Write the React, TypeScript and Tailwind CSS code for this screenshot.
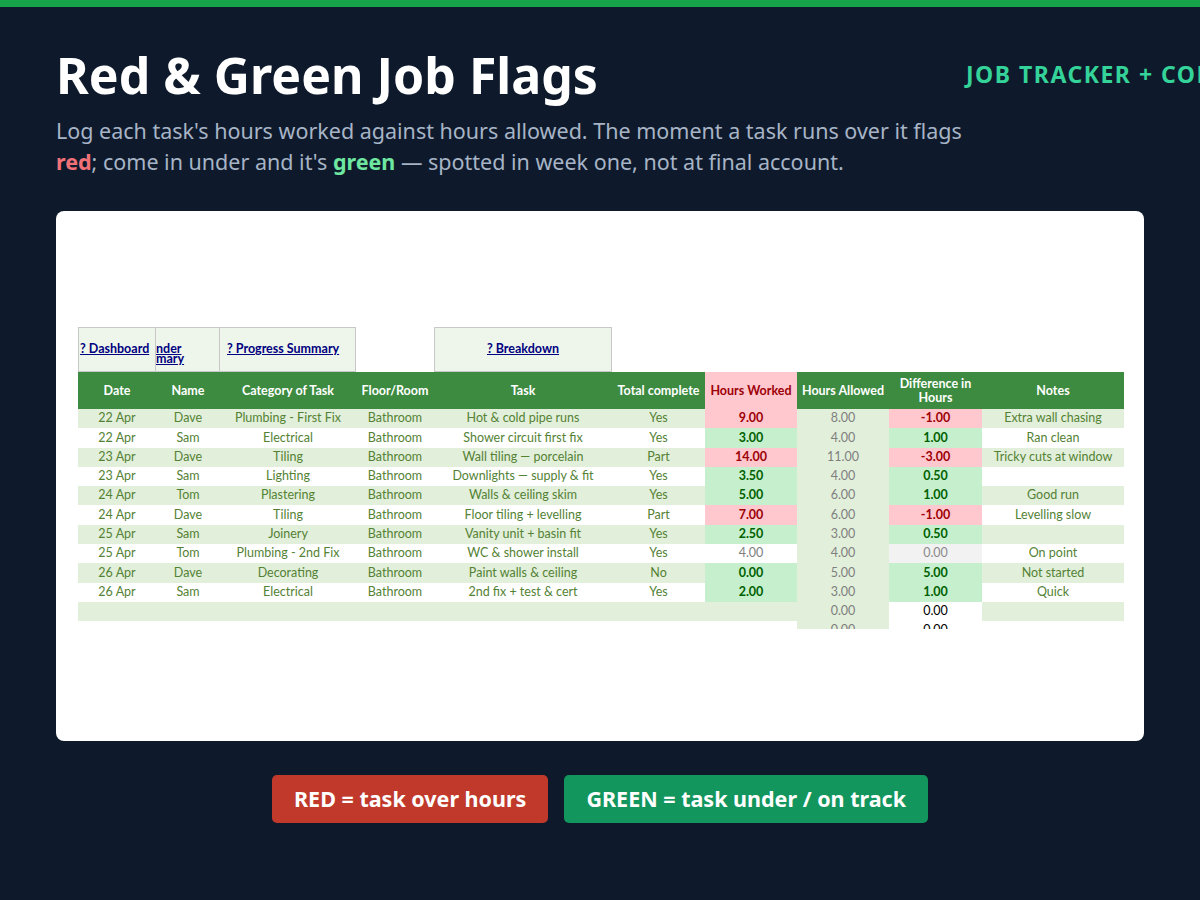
import React from "react";

type Flag = "red" | "green" | "plain" | "grey" | "none";
type Row = {
  date: string; name: string; cat: string; room: string; task: string; done: string;
  worked: string; wf: Flag; allowed: string; diff: string; df: Flag; notes: string;
};

const rows: Row[] = [
  { date: "22 Apr", name: "Dave", cat: "Plumbing - First Fix", room: "Bathroom", task: "Hot & cold pipe runs", done: "Yes", worked: "9.00", wf: "red", allowed: "8.00", diff: "-1.00", df: "red", notes: "Extra wall chasing" },
  { date: "22 Apr", name: "Sam", cat: "Electrical", room: "Bathroom", task: "Shower circuit first fix", done: "Yes", worked: "3.00", wf: "green", allowed: "4.00", diff: "1.00", df: "green", notes: "Ran clean" },
  { date: "23 Apr", name: "Dave", cat: "Tiling", room: "Bathroom", task: "Wall tiling — porcelain", done: "Part", worked: "14.00", wf: "red", allowed: "11.00", diff: "-3.00", df: "red", notes: "Tricky cuts at window" },
  { date: "23 Apr", name: "Sam", cat: "Lighting", room: "Bathroom", task: "Downlights — supply & fit", done: "Yes", worked: "3.50", wf: "green", allowed: "4.00", diff: "0.50", df: "green", notes: "" },
  { date: "24 Apr", name: "Tom", cat: "Plastering", room: "Bathroom", task: "Walls & ceiling skim", done: "Yes", worked: "5.00", wf: "green", allowed: "6.00", diff: "1.00", df: "green", notes: "Good run" },
  { date: "24 Apr", name: "Dave", cat: "Tiling", room: "Bathroom", task: "Floor tiling + levelling", done: "Part", worked: "7.00", wf: "red", allowed: "6.00", diff: "-1.00", df: "red", notes: "Levelling slow" },
  { date: "25 Apr", name: "Sam", cat: "Joinery", room: "Bathroom", task: "Vanity unit + basin fit", done: "Yes", worked: "2.50", wf: "green", allowed: "3.00", diff: "0.50", df: "green", notes: "" },
  { date: "25 Apr", name: "Tom", cat: "Plumbing - 2nd Fix", room: "Bathroom", task: "WC & shower install", done: "Yes", worked: "4.00", wf: "plain", allowed: "4.00", diff: "0.00", df: "grey", notes: "On point" },
  { date: "26 Apr", name: "Dave", cat: "Decorating", room: "Bathroom", task: "Paint walls & ceiling", done: "No", worked: "0.00", wf: "green", allowed: "5.00", diff: "5.00", df: "green", notes: "Not started" },
  { date: "26 Apr", name: "Sam", cat: "Electrical", room: "Bathroom", task: "2nd fix + test & cert", done: "Yes", worked: "2.00", wf: "green", allowed: "3.00", diff: "1.00", df: "green", notes: "Quick" },
];

const W = ["w-[78px]", "w-[64px]", "w-[136px]", "w-[78px]", "w-[178px]", "w-[93px]", "w-[92px]", "w-[92px]", "w-[93px]", "w-[142px]"];

const flagCls = (f: Flag) => {
  if (f === "red") return "bg-[#ffc7ce] text-[#9c0006] font-bold";
  if (f === "green") return "bg-[#c6efce] text-[#006100] font-bold";
  if (f === "grey") return "bg-[#f2f2f2] text-[#8a8a8a]";
  if (f === "none") return "bg-white text-black";
  return "bg-white text-[#7f7f7f]";
};

const Cell = ({ i, cls, children }: { i: number; cls: string; children?: React.ReactNode }) => (
  <div className={`${W[i]} shrink-0 h-full flex items-center justify-center whitespace-nowrap overflow-hidden ${cls}`}>{children}</div>
);

const App = () => {
  const heads = ["Date", "Name", "Category of Task", "Floor/Room", "Task", "Total complete", "Hours Worked", "Hours Allowed", "Difference in Hours", "Notes"];
  return (
    <div className="w-[1200px] h-[900px] bg-[#0e1a2b] flex flex-col [font-family:'DejaVu_Sans',sans-serif]">
      <div className="h-[7px] bg-[#16a34a]" />
      <div className="px-[56px] pt-[40px] flex justify-between items-start">
        <div>
          <h1 className="text-white font-bold text-[50px] leading-[56px] whitespace-nowrap">Red &amp; Green Job Flags</h1>
          <p className="text-[#a7b4c6] text-[21.5px] leading-[31px] mt-[12px] w-[910px]">
            Log each task's hours worked against hours allowed. The moment a task runs over it flags{" "}
            <span className="text-[#f07178] font-bold">red</span>; come in under and it's{" "}
            <span className="text-[#6ee7a0] font-bold">green</span> — spotted in week one, not at final account.
          </p>
        </div>
        <div className="text-[#34d399] font-bold text-[23px] tracking-[1.5px] mt-[10px] whitespace-nowrap">JOB TRACKER + COMPLETE</div>
      </div>

      <div className="mx-[56px] mt-[34px] h-[530px] bg-white rounded-[8px] pl-[22px] pt-[116px] [font-family:Lato,sans-serif] text-[12.5px]">
        <div className="flex h-[45px]">
          <div className="w-[78px] bg-[#eef5ea] border border-[#c8c8c8] flex items-center text-[#000080] font-bold underline pl-[1px] whitespace-nowrap overflow-hidden">? Dashboard</div>
          <div className="w-[64px] bg-[#eef5ea] border border-[#c8c8c8] border-l-0 flex flex-col justify-center text-[#000080] font-bold underline leading-[10px] overflow-hidden pt-[8px]">
            <span>nder</span><span>mary</span>
          </div>
          <div className="w-[136px] bg-[#eef5ea] border border-[#c8c8c8] border-l-0 flex items-center text-[#000080] font-bold underline pl-[7px] whitespace-nowrap">? Progress Summary</div>
          <div className="w-[78px]" />
          <div className="w-[178px] bg-[#eef5ea] border border-[#c8c8c8] flex items-center justify-center text-[#000080] font-bold underline">? Breakdown</div>
        </div>
        <div className="flex h-[37px] bg-[#3d8b40] text-white font-bold w-[1046px]">
          {heads.map((h, i) => (
            <Cell key={h} i={i} cls={i === 6 ? "bg-[#ffc7ce] !text-[#9c0006]" : ""}>
              <span className="text-center whitespace-normal leading-[14px]">{h}</span>
            </Cell>
          ))}
        </div>
        {rows.map((r, k) => {
          const stripe = k % 2 === 0;
          const base = (stripe ? "bg-[#e2efda]" : "bg-white") + " text-[#548235]";
          return (
            <div key={k} className="flex h-[19.3px] w-[1046px]">
              <Cell i={0} cls={base}>{r.date}</Cell>
              <Cell i={1} cls={base}>{r.name}</Cell>
              <Cell i={2} cls={base}>{r.cat}</Cell>
              <Cell i={3} cls={base}>{r.room}</Cell>
              <Cell i={4} cls={base}>{r.task}</Cell>
              <Cell i={5} cls={base}>{r.done}</Cell>
              <Cell i={6} cls={flagCls(r.wf)}>{r.worked}</Cell>
              <Cell i={7} cls="bg-[#e2efda] text-[#7f7f7f]">{r.allowed}</Cell>
              <Cell i={8} cls={flagCls(r.df)}>{r.diff}</Cell>
              <Cell i={9} cls={base}>{r.notes}</Cell>
            </div>
          );
        })}
        <div className="flex h-[19.3px] w-[1046px]">
          <div className="w-[719px] bg-[#e2efda]" />
          <Cell i={7} cls="bg-[#e2efda] text-[#7f7f7f]">0.00</Cell>
          <Cell i={8} cls="bg-white text-black">0.00</Cell>
          <Cell i={9} cls="bg-[#e2efda]" />
        </div>
        <div className="flex h-[8px] overflow-hidden w-[1046px] items-start">
          <div className="w-[719px]" />
          <Cell i={7} cls="bg-[#e2efda] text-[#7f7f7f] !h-[19px]">0.00</Cell>
          <Cell i={8} cls="bg-white text-black !h-[19px]">0.00</Cell>
        </div>
      </div>

      <div className="flex justify-center gap-[16px] mt-[34px]">
        <div className="bg-[#c0392b] text-white font-bold text-[21.5px] h-[48px] px-[22px] rounded-[5px] flex items-center">RED = task over hours</div>
        <div className="bg-[#12965e] text-white font-bold text-[21.5px] h-[48px] px-[22px] rounded-[5px] flex items-center">GREEN = task under / on track</div>
      </div>
    </div>
  );
};

export default App;
